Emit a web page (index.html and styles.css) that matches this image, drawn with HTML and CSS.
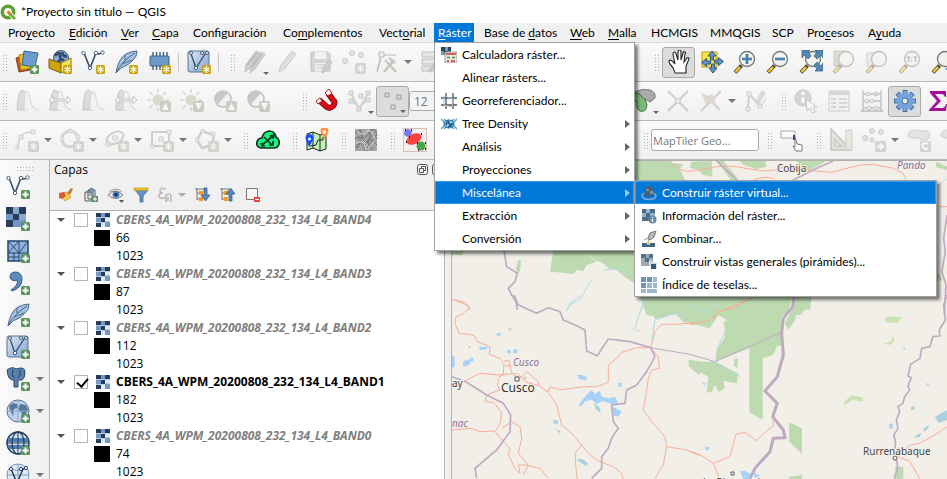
FILE: index.html
```html
<!DOCTYPE html>
<html lang="es">
<head>
<meta charset="utf-8">
<title>*Proyecto sin título — QGIS</title>
<link rel="stylesheet" href="styles.css">
</head>
<body>
<svg class="defs" aria-hidden="true">
<defs>
<linearGradient id="blue" x1="0" y1="0" x2="1" y2="1"><stop offset="0" stop-color="#dfe9f4"/><stop offset="1" stop-color="#7fa3cf"/></linearGradient>
<g id="plus"><rect x="15" y="15" width="9" height="9" rx="1.5" fill="#5b955e"/><path d="M19.500 16.500v6M16.500 19.500h6" stroke="#fff" stroke-width="2"/></g>
<g id="star"><rect x="15" y="15" width="9" height="9" rx="1.500" fill="#c8a412"/><path d="M19.500 16v7M16.500 17.700l6 3.600M16.500 21.300l6-3.600" stroke="#fff" stroke-width="1.300"/></g>
<g id="lens"><circle cx="14" cy="9" r="7.500" fill="#f1f1ee" stroke="#777b77" stroke-width="1.300"/><path d="M8.500 15.500 2 22.500" stroke="#4b4527" stroke-width="4"/><path d="M7 17 2.500 22" stroke="#f3c934" stroke-width="2.500"/></g>
<symbol id="i-logo" viewBox="0 0 16 16"><circle cx="8" cy="8" r="5.700" fill="none" stroke="#5d9f35" stroke-width="3.600"/><path d="m8.500 8.500 6.500 6.500" stroke="#fff" stroke-width="4.500"/><path d="m9 9 6 6" stroke="#6fad3b" stroke-width="3"/><path d="m7.500 7.500 3 3" stroke="#ee7913" stroke-width="3"/></symbol>
<symbol id="i-source" viewBox="0 0 24 24"><path d="m1 8 11-3 3 15-11 2z" fill="#c8501c" stroke="#86401c"/><path d="m4 5 11-2 2 15-11 2z" fill="#f0c419" stroke="#a78316"/><path d="m9 1 14 2-3 14-13-2z" fill="#6f9ace" stroke="#41678f"/><use href="#plus"/></symbol>
<symbol id="i-box" viewBox="0 0 24 24"><circle cx="13" cy="8" r="7.500" fill="#8db1dc" stroke="#415b7b"/><path d="M7 6q4-6 5 0t4 3M14 2q1 5 5 4M10 12l3-3" stroke="#304c6f" stroke-width="3" fill="none"/><path d="m1 9 12 4v10L1 18z" fill="#cfa300" stroke="#745d12"/><path d="m13 13 10-5v10l-10 5z" fill="#f6e163" stroke="#8d7419"/><use href="#star"/></symbol>
<g id="vee"><path d="M3 3 9 18 15 3q3 2 6-.500" fill="none" stroke="#39506b" stroke-width="1.600"/><g fill="#fff" stroke="#44576d" stroke-width=".9"><circle cx="2.500" cy="3" r="1.700"/><circle cx="9" cy="18" r="1.700"/><circle cx="15" cy="3" r="1.700"/><circle cx="21.500" cy="2.500" r="1.700"/></g></g>
<symbol id="i-vnew" viewBox="0 0 24 24"><use href="#vee"/><use href="#star"/></symbol>
<symbol id="i-vadd" viewBox="0 0 24 24"><use href="#vee"/><use href="#plus"/></symbol>
<g id="feather"><path d="M2 23Q4 9 12 4q6-3 11-3 0 6-4 9-4 5-12 8z" fill="#a4c1df" stroke="#48698b"/><path d="M2 23Q8 11 21 3M8 14l10-4M11 10V5" fill="none" stroke="#48698b"/></g>
<symbol id="i-fnew" viewBox="0 0 24 24"><use href="#feather"/><use href="#star"/></symbol>
<symbol id="i-fadd" viewBox="0 0 24 24"><use href="#feather"/><use href="#plus"/></symbol>
<symbol id="i-chip" viewBox="0 0 24 24"><path d="M6 2v18M9.500 2v18M13 2v18M16.500 2v18M20 2v18" stroke="#35516e" stroke-width="1.300"/><rect x="3" y="6" width="19" height="10" rx="1" fill="#6f98ca" stroke="#3e628b"/><use href="#star"/></symbol>
<g id="vbox"><rect x="1" y="1" width="21" height="21" rx="2" fill="url(#blue)" stroke="#55779c"/><path d="m4 4 5 14L18 4l3-1" fill="none" stroke="#334e6b" stroke-width="1.300"/><g fill="#fff" stroke="#445c76"><circle cx="4" cy="3" r="1.500"/><circle cx="9" cy="18" r="1.700"/><circle cx="15" cy="3" r="1.500"/><circle cx="20" cy="3" r="1.500"/></g></g>
<symbol id="i-vbnew" viewBox="0 0 24 24"><use href="#vbox"/><use href="#star"/></symbol>
<symbol id="i-vbadd" viewBox="0 0 24 24"><use href="#vbox"/><use href="#plus"/></symbol>
<symbol id="i-pencils" viewBox="0 0 24 24"><g fill="#a89c98" stroke="#777"><path d="m2 22 1-7L13 1l4 2L7 18z"/><path d="m7 23 1-7L18 2l4 2-10 15z"/></g><path d="m4 15 10-12M9 17 19 4" stroke="#776b66" stroke-width="2"/></symbol>
<symbol id="i-pencil" viewBox="0 0 24 24"><path d="m3 22 2-7L16 1l4 3L9 18z" fill="#d4d4c2" stroke="#888874"/><path d="m7 16 10-13" stroke="#8b8b75"/></symbol>
<symbol id="i-save" viewBox="0 0 24 24"><path d="M2 2h17l2 2v17H2z" fill="#aaa" stroke="#777"/><path d="M6 2h11v7H6zM6 13h12v8H6z" fill="#eee"/><path d="M7 15h9M7 18h9" stroke="#888"/><path d="m13 23 1-5 6-8 3 2-6 9z" fill="#a9a190" stroke="#777"/></symbol>
<symbol id="i-points" viewBox="0 0 24 24"><g fill="#ccc" stroke="#888"><circle cx="3" cy="11" r="2.500"/><circle cx="10" cy="3" r="2.500"/><circle cx="19" cy="5" r="2.500"/></g><rect x="13" y="13" width="11" height="11" rx="2" fill="#aaa798"/><path d="M18.500 15v7M15.500 16.500l6 4M15.500 20.500l6-4" stroke="#fff" stroke-width="1.300"/></symbol>
<symbol id="i-vertex" viewBox="0 0 24 24"><path d="M2 22 6 5h15M6 9 2 22" fill="none" stroke="#666"/><path d="M4 2h5v5H4z" fill="#eee" stroke="#666"/><path d="m9 22 10-12M10 10l11 12M14 8l6 5" stroke="#8b8876" stroke-width="2.500"/></symbol>
<symbol id="i-form" viewBox="0 0 24 24"><path d="M2 2h18v5H2zM2 9h18v5H2zM2 16h18v5H2z" fill="#d4d4c2" stroke="#777"/><path d="m9 22 12-15" stroke="#888" stroke-width="3"/></symbol>
<symbol id="i-hand" viewBox="0 0 24 24"><path d="M8 23q-1-5-5-9-2-3 0-4 2 0 5 4L6 4q0-2 1-2 2 0 2 2l2 6V2q0-2 1.500-2T14 2v8l2-7q0-2 2-1 1 0 0 2l-1 8 3-4q2-1 2 1l-3 7v7z" fill="#fff" stroke="#202020" stroke-width="1.100"/></symbol>
<symbol id="i-pan" viewBox="0 0 24 24"><path d="M2 2h15v15H2z" fill="#ffe43d" stroke="#b59a1b"/><path id="ar" d="m12 1 4 5h-2.500v4h-3V6H8z" fill="#6094c8" stroke="#315779"/><use href="#ar" transform="rotate(90 12.500 12)"/><use href="#ar" transform="rotate(180 12.500 12)"/><use href="#ar" transform="rotate(270 12.500 12)"/></symbol>
<symbol id="i-zin" viewBox="0 0 24 24"><use href="#lens"/><path d="M14 4v10M9 9h10" stroke="#4c80ad" stroke-width="2.700"/></symbol>
<symbol id="i-zout" viewBox="0 0 24 24"><use href="#lens"/><path d="M9 9h10" stroke="#4c80ad" stroke-width="2.700"/></symbol>
<symbol id="i-zfull" viewBox="0 0 24 24"><use href="#lens"/><g fill="#5688b5" stroke="#395e80" stroke-width=".7"><path d="M3 0h8L9 2l3 4-3 3-4-4-2 3zM24 0h-8l2 2-3 4 3 3 4-4 2 3zM24 21h-8l2-2-3-4 3-3 4 4 2-3z"/></g></symbol>
<symbol id="i-zsel" viewBox="0 0 24 24"><path d="M2 1h11v15H2z" fill="#bcb99d" stroke="#999"/><use href="#lens"/></symbol>
<symbol id="i-zlay" viewBox="0 0 24 24"><path d="M2 3h11v13H2z" fill="#ddd" stroke="#999"/><use href="#lens"/></symbol>
<symbol id="i-zone" viewBox="0 0 24 24"><use href="#lens"/><text x="8" y="12" class="one">1:1</text></symbol>
<symbol id="i-zlast" viewBox="0 0 24 24"><use href="#lens"/><path d="m23 13-9 6 9 5z" fill="#4c80ad"/></symbol>
<symbol id="i-hist" viewBox="0 0 24 24"><path d="M2 21Q3 1 7 1q5 0 6 20z" fill="#b8c0b2" stroke="#888"/><path d="M9 21q0-19 3-19 2 0 4 12 2 6 7 7" fill="#eee" stroke="#aaa"/></symbol>
<symbol id="i-hist2" viewBox="0 0 24 24"><use href="#i-hist" width="24" height="24"/><path d="m1 11 4-4v3h14V7l4 4-4 4v-3H5v3z" fill="#eee" stroke="#888"/></symbol>
<g id="sun"><path d="M11 0v22M0 11h22M3 3l16 16M19 3 3 19" stroke="#a8a48e" stroke-width="1.500"/><circle cx="11" cy="11" r="6.500" fill="#b8b49e" stroke="#f5f5f5" stroke-width="2"/></g>
<g id="up"><rect x="13" y="12" width="11" height="11" rx="2" fill="#97978c"/><path d="m18.500 14-3.500 7h7z" fill="#fff"/></g>
<g id="down"><rect x="13" y="12" width="11" height="11" rx="2" fill="#97978c"/><path d="m18.500 21-3.500-7h7z" fill="#fff"/></g>
<g id="half"><circle cx="10" cy="10" r="8" fill="#eee" stroke="#777" stroke-width="1.500"/><path d="M5 15A7 7 0 0 1 15 4z" fill="#888"/></g>
<symbol id="i-sunup" viewBox="0 0 24 24"><use href="#sun"/><use href="#up"/></symbol>
<symbol id="i-sundn" viewBox="0 0 24 24"><use href="#sun"/><use href="#down"/></symbol>
<symbol id="i-cup" viewBox="0 0 24 24"><use href="#half"/><use href="#up"/></symbol>
<symbol id="i-cdn" viewBox="0 0 24 24"><use href="#half"/><use href="#down"/></symbol>
<symbol id="i-magnet" viewBox="0 0 24 24"><path d="m4 11 8 7q3 2 6-1 3-4 0-6l-5-7" fill="none" stroke="#7c0808" stroke-width="6"/><path d="m5 12 7 6q3 2 6-1 3-4 0-6l-4-6" fill="none" stroke="#d60b14" stroke-width="4.500"/><path d="m1 12 4-3 2 3-4 3zM10 4l4-4 3 4-4 3z" fill="#fff" stroke="#a22"/></symbol>
<symbol id="i-tree" viewBox="0 0 24 24"><path d="m3 4 8 16 9-16M4 12l7 6 9-7" fill="none" stroke="#999" stroke-width="1.500"/><g fill="#ccc" stroke="#888"><path d="M1 2h4v4H1zM18 2h4v4h-4zM1 10h4v4H1zM18 9h4v4h-4zM9 18h4v4H9zM11 5h4v4h-4z"/></g></symbol>
<symbol id="i-squares" viewBox="0 0 24 24"><g fill="#ddd" stroke="#999"><path d="M4 4h4v4H4zM16 6h4v4h-4zM10 16h4v4h-4z"/></g></symbol>
<symbol id="i-blob" viewBox="0 0 24 24"><path d="M2 3q7-4 15-2 6 2 5 8l-5 4-7-4z" fill="#aaa" stroke="#777"/><path d="M1 5q6-2 8 3 4 2 5 8-1 8-7 6-4-2-3-8-5-4-3-9z" fill="#7cba78" stroke="#3f7541"/></symbol>
<symbol id="i-cross" viewBox="0 0 24 24"><path d="m2 2 20 20M22 2 2 22" stroke="#999" stroke-width="2"/><circle cx="12" cy="12" r="2.500" fill="#ddd" stroke="#999"/></symbol>
<symbol id="i-split" viewBox="0 0 24 24"><path d="M22 2 2 22M12 12l9 9" stroke="#999" stroke-width="2"/><path d="m2 3 6 4 6-2 3 13-6-5-4 3z" fill="#bbb398"/></symbol>
<symbol id="i-trace" viewBox="0 0 24 24"><path d="m4 20 1-15 11 12" fill="none" stroke="#999" stroke-width="2"/><path d="M3 3h4v4H3zM2 18h4v4H2zM14 15h4v4h-4z" fill="#ddd" stroke="#999"/><path d="m12 13 6-11 3 2-6 10zM22 9l-4 7" fill="#bcb99d" stroke="#999"/></symbol>
<symbol id="i-info" viewBox="0 0 24 24"><circle cx="9" cy="9" r="8" fill="#aaa" stroke="#888"/><path d="M9 8v6M9 3v3" stroke="#fff" stroke-width="3"/><path d="m12 10 1 12 3-3 2 5 3-1-2-5h4z" fill="#fff" stroke="#888"/></symbol>
<symbol id="i-table" viewBox="0 0 24 24"><path d="M2 2h20v20H2z" fill="#eee" stroke="#999"/><path d="M2 2h20v4H2z" fill="#aaa"/><path d="M4 10h5m3 0h8M4 14h5m3 0h8M4 18h5m3 0h8" stroke="#999" stroke-width="1.500"/></symbol>
<symbol id="i-abacus" viewBox="0 0 24 24"><path d="M3 1v22M21 1v22M3 5h18M3 12h18M3 19h18M1 22h22" stroke="#777" stroke-width="1.300"/><g fill="#ddd" stroke="#888"><circle cx="8" cy="5" r="2"/><circle cx="16" cy="5" r="2" fill="#caa"/><circle cx="7" cy="12" r="2"/><circle cx="12" cy="12" r="2"/><circle cx="9" cy="19" r="2"/><circle cx="16" cy="19" r="2"/></g></symbol>
<symbol id="i-gear" viewBox="0 0 24 24"><path d="M12 1v22M1 12h22M4.200 4.200l15.600 15.600M19.800 4.200 4.200 19.800" stroke="#466f9b" stroke-width="5"/><path d="M12 2v20M2 12h20M5 5l14 14M19 5 5 19" stroke="#74a3df" stroke-width="3.500"/><circle cx="12" cy="12" r="7.500" fill="#74a3df"/><circle cx="12" cy="12" r="3" fill="#e5e8ee" stroke="#466f9b"/></symbol>
<symbol id="i-sigma" viewBox="0 0 24 24"><path d="M4 2h16v6h-1q-1-3-4-3H9l6 7-7 7h8q3 0 4-4h1l-1 7H3v-1l8-9-7-8z" fill="#a90d9c"/></symbol>
<g id="gst"><rect x="13" y="13" width="11" height="11" rx="2" fill="#aaa798"/><path d="M18.500 15v7M15.500 16.500l6 4M15.500 20.500l6-4" stroke="#fff" stroke-width="1.300"/></g>
<symbol id="i-curve" viewBox="0 0 24 24"><path d="M3 20Q3 3 18 4" fill="none" stroke="#999" stroke-width="1.500"/><path d="M1 18h3v3H1zM4 7h4v4H4zM16 2h4v4h-4z" fill="#ddd" stroke="#999"/><use href="#gst"/></symbol>
<symbol id="i-circle" viewBox="0 0 24 24"><circle cx="10" cy="11" r="8" fill="none" stroke="#aaa" stroke-width="3"/><g fill="#ddd" stroke="#999"><circle cx="10" cy="3" r="2"/><circle cx="2" cy="11" r="2"/><circle cx="18" cy="9" r="2"/></g><use href="#gst"/></symbol>
<symbol id="i-ellipse" viewBox="0 0 24 24"><ellipse cx="10" cy="10" rx="9" ry="5.500" fill="none" stroke="#999" stroke-width="2" transform="rotate(-28 10 10)"/><circle cx="10" cy="10" r="2.500" fill="#ddd" stroke="#999"/><path d="M1 14h4v4H1z" fill="#ddd" stroke="#999"/><use href="#gst"/></symbol>
<symbol id="i-rect" viewBox="0 0 24 24"><path d="M2 4h17v14H2z" fill="none" stroke="#999" stroke-width="2"/><path d="M9 9h4v4H9zM17 2h4v4h-4zM0 16h4v4H0z" fill="#ddd" stroke="#999"/><use href="#gst"/></symbol>
<symbol id="i-poly" viewBox="0 0 24 24"><path d="M7 3 2 12l5 8 10-3 2-10z" fill="none" stroke="#999" stroke-width="2.500"/><g fill="#ddd" stroke="#999"><circle cx="8" cy="3" r="2"/><circle cx="2" cy="12" r="2"/><circle cx="18" cy="6" r="2"/></g><use href="#gst"/></symbol>
<symbol id="i-cloud" viewBox="0 0 24 24"><path d="M5 20q-5-1-4-6 1-4 5-4 1-6 7-7 6 0 7 6 4 2 3 7-1 4-5 4z" fill="#1df07b" stroke="#0b3521" stroke-width="1.700"/><path d="m6 17 11-9M8 9l8 8M14 8l4-1-1 4M13 17h4v-4M5 15l1 3h3" fill="none" stroke="#083c23" stroke-width="1.700"/></symbol>
<symbol id="i-route" viewBox="0 0 24 24"><path d="m2 6 6-2 7 3 6-2v16l-6 2-7-3-6 2z" fill="#c0f2b5" stroke="#222"/><path d="M8 4v16M15 7v16M5 18l6-1 2-5h5V9" fill="none" stroke="#222"/><path d="M4 19 1 12a4 4 0 1 1 7 0z" fill="#174cff"/><circle cx="4.500" cy="11" r="1.500" fill="#fff"/><path d="m20 11-4-6a4 4 0 1 1 7 0z" fill="#ff9142"/><circle cx="19.500" cy="4" r="1.800" fill="#fff"/></symbol>
<symbol id="i-noise" viewBox="0 0 24 24"><path d="M1 1h22v22H1z" fill="#a5a5a5"/><path d="M1 5q6-5 7 2t7-2 8 3M1 11q5-4 8 1t7-2 7 1M2 20q1-6 6-4t6-3 9 4M6 1l5 22M17 1l-4 22M20 12q-6 2-2 10M4 8q5 5-1 12" fill="none" stroke="#777"/><path d="M3 3q5 6 9 1t9 6M2 15q8-3 9 4t9-6M8 12l6 6" fill="none" stroke="#ddd"/></symbol>
<symbol id="i-blobs" viewBox="0 0 24 24"><path d="M.5.5h23v23H.5z" fill="#f4eeee" stroke="#d8bcbc"/><circle cx="5" cy="5" r="3.800" fill="#7777f4"/><ellipse cx="11" cy="11" rx="8" ry="5" transform="rotate(-28 11 11)" fill="#ff4343"/><circle cx="18" cy="18" r="4.500" fill="#48a34b"/><path d="M2 2h1M8 2h1M6 9h1M3 14h1M18 6h1M14 15h1M22 15h1M22 21h1M15 22h1" stroke="#222" stroke-width="2"/></symbol>
<symbol id="i-click" viewBox="0 0 24 24"><path d="M1 3h14v7H1z" fill="#fafafa" stroke="#aaa"/><path d="M14 7v5" stroke="#33a" stroke-width="2"/><path d="m15 9 2 7 5 1v6h-6l-3-5 2 1z" fill="#fff" stroke="#777"/></symbol>
<symbol id="i-angle" viewBox="0 0 24 24"><path d="M2 1v21h20zM6 12v6h6z" fill="#ccc8bd" stroke="#888" stroke-width="1.500" fill-rule="evenodd"/><path d="M17 2h6v20h-6z" fill="#ddd8bd" stroke="#999"/></symbol>
<symbol id="i-move" viewBox="0 0 24 24"><g fill="#ccc" stroke="#888"><circle cx="3" cy="10" r="2.500"/><circle cx="10" cy="3" r="2.500"/><circle cx="19" cy="4" r="2.500"/><circle cx="10" cy="12" r="2"/></g><rect x="13" y="13" width="11" height="11" rx="1" fill="#aaa"/><path d="M15 18.500h6m-3-3 3 3-3 3" fill="none" stroke="#fff" stroke-width="2"/></symbol>
<symbol id="i-rot" viewBox="0 0 24 24"><path d="M1 8Q1 2 8 2t9 1q6-1 6 4t-7 5q-5-3-8-2t-7-2z" fill="#ccc" stroke="#999"/><rect x="13" y="13" width="11" height="11" rx="1" fill="#aaa"/><path d="M21 20q-3 3-5-1t3-4l2 1" fill="none" stroke="#fff" stroke-width="2"/></symbol>
<symbol id="i-radd" viewBox="0 0 24 24"><path d="M0 0h20v20H0z" fill="#6e95c4"/><path d="M0 0h7v7H0zM13 0h7v7h-7zM7 7h6v6H7zM0 13h7v7H0z" fill="#263c58"/><path d="M7 0h6v7H7zM13 7h7v6h-7z" fill="#89aad0"/><use href="#plus"/></symbol>
<symbol id="i-mesh" viewBox="0 0 24 24"><path d="M2 2h20v20H2z" fill="#8fb3dd" stroke="#274668" stroke-width="1.500"/><path d="M13 2v20M2 14h20M2 2l11 12M13 2 2 14M22 2 13 14M8 14v8M2 18h11" fill="none" stroke="#274668"/><use href="#plus"/></symbol>
<symbol id="i-comma" viewBox="0 0 24 24"><path d="M5 19q8-5 6-10-6 2-7-3 0-5 6-5 6 1 6 7 0 9-10 12z" fill="#5c8cbc" stroke="#35597f"/><use href="#plus"/></symbol>
<symbol id="i-pg" viewBox="0 0 24 24"><path d="M1 3q5-4 9-1 9-3 9 3 0 6-3 8h-4v7H8v-7q-6 1-7-10z" fill="#5680ad" stroke="#2b496b"/><path d="M7 3q-2 5 1 8M14 3q1 6-2 8" fill="none" stroke="#243f5d"/><use href="#plus"/></symbol>
<symbol id="i-globe1" viewBox="0 0 24 24"><circle cx="12" cy="12" r="11" fill="#bdd2e9" stroke="#54779d"/><path d="m3 7 4-3 4 1 1 4-4 1-1 7-3-6zM14 5l6 1 2 5-4 7-3-5-3-2z" fill="#3d6287" opacity=".8"/><path d="M1 12h22M12 1v22" stroke="#8aa9cb"/><use href="#plus"/></symbol>
<symbol id="i-globe2" viewBox="0 0 24 24"><circle cx="12" cy="12" r="11" fill="#d6e4f2" stroke="#223f5e" stroke-width="1.500"/><path d="M2 7h20v4H2zM1 14h21v4H3z" fill="#4f7eb0"/><ellipse cx="12" cy="12" rx="6" ry="11" fill="none" stroke="#223f5e" stroke-width="1.300"/><path d="M12 1v22M1 12h22" stroke="#223f5e"/><use href="#plus"/></symbol>
<symbol id="i-globe3" viewBox="0 0 24 24"><circle cx="12" cy="12" r="11" fill="#e1ebf5" stroke="#779bbf"/><path d="M1 12h22M12 1v22M4 5q8 5 16 0" fill="none" stroke="#779bbf"/><path d="m5 6 6 14 6-14 3-1" fill="none" stroke="#263f5c" stroke-width="1.500"/><g fill="#fff" stroke="#263f5c"><circle cx="5" cy="6" r="1.600"/><circle cx="15" cy="6" r="1.600"/><circle cx="20" cy="5" r="1.600"/></g></symbol>
<symbol id="i-brush" viewBox="0 0 16 16"><path d="m9 6 4-5 2 1-3 6z" fill="#c47831"/><path d="m2 7 6-2 5 5-6 4z" fill="#f5d548" stroke="#b78b2c" stroke-width=".7"/><path d="m1 6 5-1 2 4-4 3-3-1z" fill="#df563c"/></symbol>
<symbol id="i-group" viewBox="0 0 16 16"><path d="M2 5h7v9H2zM5 3h7v9H5z" fill="#eee" stroke="#555"/><path d="M7 9V2q2-2 3 0v8" fill="none" stroke="#3e6691"/><path d="M9 9h6v6H9z" fill="#5b955e"/><path d="M12 10v4m-2-2h4" stroke="#fff"/></symbol>
<symbol id="i-eye" viewBox="0 0 16 16"><path d="M0 8q7-8 15 0-7 7-15 0z" fill="#eee" stroke="#777"/><circle cx="8" cy="7.500" r="3.500" fill="#4b81b7"/><circle cx="8" cy="7.500" r="1.500" fill="#112a45"/><path d="M1 5q7-6 13 0" fill="none" stroke="#999"/><path d="M11 13h5l-2.500 3z" fill="#555"/></symbol>
<symbol id="i-filter" viewBox="0 0 16 16"><path d="M2 3h13L10 9v6H7V9z" fill="#6294c7" stroke="#3c6791" stroke-width=".8"/><path d="M1 1h14v2.500H1z" fill="#f2c92a" stroke="#a88a1b" stroke-width=".6"/></symbol>
<symbol id="i-eps" viewBox="0 0 16 16"><path d="M8 2q-6-2-6 2 0 2 3 2-4 0-4 3 0 4 7 1M8 15V9q0-2 2.500-2T13 9v6m-3-5v4" fill="none" stroke="#bbb" stroke-width="1.700"/></symbol>
<g id="nodes"><path d="M2 1v12M0 2h9M2 6h3m-3 6h3" stroke="#777" fill="none"/><path d="M4 4h4v4H4zM4 10h4v4H4z" fill="#f59b24"/></g>
<symbol id="i-expand" viewBox="0 0 16 16"><use href="#nodes"/><path d="M9 1h3v7h3l-4.500 6L6 8h3z" fill="#5688bd" stroke="#2f5681" stroke-width=".7"/></symbol>
<symbol id="i-collapse" viewBox="0 0 16 16"><use href="#nodes"/><path d="M9 14h3V7h3l-4.500-6L6 7h3z" fill="#5688bd" stroke="#2f5681" stroke-width=".7"/></symbol>
<symbol id="i-remove" viewBox="0 0 16 16"><path d="M1.500 1.500h11v11h-11z" fill="#f5f5f5" stroke="#777"/><path d="M9 10h6v5H9z" fill="#ee4141"/><path d="M10 12.500h4" stroke="#fff"/></symbol>
<symbol id="i-raster" viewBox="0 0 14 14"><path d="M0 0h14v14H0z" fill="#b4cbe7"/><path d="M0 0h5v4H0zM9 0h5v4H9zM5 5h4v4H5zM0 10h5v4H0z" fill="#263c58"/><path d="M0 5h5v4H0zM9 9h5v5H9zM5 0h4v4H5z" fill="#7899c2"/><path d="M9 5h5v3H9zM5 10h4v4H5z" fill="#dfebf8"/></symbol>
<symbol id="i-dock" viewBox="0 0 12 12"><rect x=".5" y=".5" width="10" height="10" rx="2" fill="none" stroke="#555"/><path d="M2.500 4.500h4v4h-4zM4.500 4V2.500h4v4H7" fill="none" stroke="#555"/></symbol>
<symbol id="m-calc" viewBox="0 0 16 16"><path d="M0 0h10v8H0z" fill="#789bb5"/><path d="M0 0h4v4H0zM7 0h3v4H7zM3 4h4v3H3z" fill="#2c4358"/><path d="M4 5h12v11H4z" fill="#e9e9e2" stroke="#888" stroke-width=".8"/><path d="M5 7h10M6 14h2m2 0h4" stroke="#c33" stroke-width="1.500"/><path d="M6 10.500h3m2 0h3" stroke="#4a915b" stroke-width="1.500"/></symbol>
<symbol id="m-geo" viewBox="0 0 16 16"><path d="M5 0v16M12 0v16M0 5h16M0 12h16" stroke="#555" stroke-width="1.300"/><path d="M3 3 13 6l-2 8-8-2z" fill="none" stroke="#a8c5dc"/></symbol>
<symbol id="m-tree" viewBox="0 0 16 16"><path d="m0 3 5 5-5 5M16 3l-5 5 5 5M3 3l10 10M3 13 13 3" fill="none" stroke="#51a6d2" stroke-width="1.500"/><ellipse cx="8" cy="8" rx="5" ry="4" fill="#93cbe8" stroke="#20608f"/><path d="M5 9q2-6 3-2t4 0M7 11l4-2" fill="none" stroke="#174f7d" stroke-width="1.500"/></symbol>
<symbol id="m-virt" viewBox="0 0 16 16"><ellipse cx="8" cy="11" rx="7" ry="3.500" fill="none" stroke="#89acd0" stroke-width="1.500"/><path d="M4 6q0-5 4-5t4 5l1 4q-5 3-10 0z" fill="#465f75"/><path d="M5 4h3v2H5zM9 6h3v3H9z" fill="#7f94a5"/></symbol>
<symbol id="m-info" viewBox="0 0 16 16"><path d="M1 1h13v12H1z" fill="#4c6b85"/><path d="M5 1h4v4H5zM1 5h4v4H1zM9 5h5v4H9z" fill="#9ab2c6"/><circle cx="11.500" cy="11.500" r="4" fill="#6887a1"/><path d="M11.500 11v3m0-5v1" stroke="#fff" stroke-width="1.500"/></symbol>
<symbol id="m-merge" viewBox="0 0 16 16"><path d="m7 7 2-5 6-2-2 6-4 3z" fill="#b8bcb9" stroke="#777"/><path d="m3 9 4-2 1 5" fill="none" stroke="#999"/><path d="M1 12h13v4H1z" fill="#42647f"/><circle cx="7.500" cy="12" r="2" fill="#d6da88"/></symbol>
<symbol id="m-pyr" viewBox="0 0 16 16"><path d="M0 0h12v12H0z" fill="#9bacb9"/><path d="M0 0h5v4H0zM4 4h4v4H4zM8 0h4v4H8z" fill="#56718a"/><path d="m8 6 8 3v6l-8-3z" fill="#d7dbdf"/><path d="M10 10h5v5h-5z" fill="#355a7b"/></symbol>
<symbol id="m-tile" viewBox="0 0 16 16"><path d="M0 0h5v5H0zM6 0h5v5H6zM0 6h5v5H0z" fill="#6f93ad"/><path d="M12 0h4v5h-4zM6 6h5v5H6zM0 12h5v4H0zM12 6h4v5h-4zM6 12h10v4H6z" fill="#9cb8cc"/></symbol>
</defs>
</svg>

<header class="title"><svg class="logo"><use href="#i-logo"/></svg><h1>*Proyecto sin título — QGIS</h1></header>

<nav class="menubar" aria-label="Menú principal">
<button>Pro<u>y</u>ecto</button><button><u>E</u>dición</button><button><u>V</u>er</button><button><u>C</u>apa</button><button>Configuración</button><button>Co<u>m</u>plementos</button><button>Vect<u>o</u>rial</button>
<div class="open"><button class="on"><u>R</u>áster</button>
<div class="menu">
<button><svg><use href="#m-calc"/></svg>Calculadora ráster...</button>
<button><i></i>Alinear rásters...</button>
<button><svg><use href="#m-geo"/></svg>Georreferenciador...</button>
<button class="sub"><svg><use href="#m-tree"/></svg>Tree Density</button>
<button class="sub"><i></i>Análisis</button>
<button class="sub"><i></i>Proyecciones</button>
<div class="open"><button class="sub hot"><i></i>Miscelánea</button>
<div class="menu second">
<button class="hot"><svg><use href="#m-virt"/></svg>Construir ráster virtual...</button>
<button><svg><use href="#m-info"/></svg>Información del ráster...</button>
<button><svg><use href="#m-merge"/></svg>Combinar...</button>
<button><svg><use href="#m-pyr"/></svg>Construir vistas generales (pirámides)...</button>
<button><svg><use href="#m-tile"/></svg>Índice de teselas...</button>
</div></div>
<button class="sub"><i></i>Extracción</button>
<button class="sub"><i></i>Conversión</button>
</div></div>
<button>Base de <u>d</u>atos</button><button><u>W</u>eb</button><button><u>M</u>alla</button><button>HCMGIS</button><button>MMQGIS</button><button>SCP</button><button>Pro<u>c</u>esos</button><button>A<u>y</u>uda</button>
</nav>

<div class="bar">
<div class="group first"><button><svg><use href="#i-source"/></svg></button><button><svg><use href="#i-box"/></svg></button><button><svg><use href="#i-vnew"/></svg></button><button><svg><use href="#i-fnew"/></svg></button><button><svg><use href="#i-chip"/></svg></button><hr><button><svg><use href="#i-vbnew"/></svg></button><hr></div>
<div class="group off file"><button class="mini"><svg><use href="#i-pencils"/></svg></button><button><svg><use href="#i-pencil"/></svg></button><button><svg><use href="#i-save"/></svg></button><button><svg><use href="#i-points"/></svg></button><button class="drop"><svg><use href="#i-vertex"/></svg></button><button><svg><use href="#i-form"/></svg></button></div>
<div class="group"><button class="down"><svg><use href="#i-hand"/></svg></button><button><svg><use href="#i-pan"/></svg></button><button><svg><use href="#i-zin"/></svg></button><button><svg><use href="#i-zout"/></svg></button><button><svg><use href="#i-zfull"/></svg></button><button class="dim"><svg><use href="#i-zsel"/></svg></button><button class="dim"><svg><use href="#i-zlay"/></svg></button><button class="dim"><svg><use href="#i-zone"/></svg></button><button><svg><use href="#i-zlast"/></svg></button></div>
</div>

<div class="bar">
<div class="group first off hist"><button><svg><use href="#i-hist"/></svg></button><button><svg><use href="#i-hist2"/></svg></button><button><svg><use href="#i-hist"/></svg></button><button><svg><use href="#i-hist2"/></svg></button><button><svg><use href="#i-sunup"/></svg></button><button><svg><use href="#i-sundn"/></svg></button><button><svg><use href="#i-cup"/></svg></button><button><svg><use href="#i-cdn"/></svg></button></div>
<div class="group snap"><button><svg><use href="#i-magnet"/></svg></button><button class="dim mini"><svg><use href="#i-tree"/></svg></button><button class="down mini"><svg><use href="#i-squares"/></svg></button><input class="num" aria-label="Tolerancia" value="12"></div>
<div class="group bare digit"><button class="mini"><svg><use href="#i-blob"/></svg></button><button class="dim"><svg><use href="#i-cross"/></svg></button><button class="dim drop"><svg><use href="#i-split"/></svg></button><button class="dim"><svg><use href="#i-trace"/></svg></button></div>
<div class="group"><button class="dim"><svg><use href="#i-info"/></svg></button><button class="dim"><svg><use href="#i-table"/></svg></button><button class="dim"><svg><use href="#i-abacus"/></svg></button><button class="down"><svg><use href="#i-gear"/></svg></button><button><svg><use href="#i-sigma"/></svg></button></div>
</div>

<div class="bar">
<div class="group first off"><button class="drop"><svg><use href="#i-curve"/></svg></button><button class="drop"><svg><use href="#i-circle"/></svg></button><button class="drop"><svg><use href="#i-ellipse"/></svg></button><button class="drop"><svg><use href="#i-rect"/></svg></button><button class="drop"><svg><use href="#i-poly"/></svg></button></div>
<div class="group"><button><svg><use href="#i-cloud"/></svg></button></div>
<div class="group"><button><svg><use href="#i-route"/></svg></button></div>
<div class="group"><button><svg><use href="#i-noise"/></svg></button></div>
<div class="group plug"><button><svg><use href="#i-blobs"/></svg></button></div>
<div class="group"><input class="geo" aria-label="Geocodificador" placeholder="MapTiler Geo..."></div>
<div class="group"><button><svg><use href="#i-click"/></svg></button></div>
<div class="group off"><button><svg><use href="#i-angle"/></svg></button><button class="drop"><svg><use href="#i-move"/></svg></button><button><svg><use href="#i-rot"/></svg></button><button><svg><use href="#i-rot"/></svg></button></div>
</div>

<main>
<aside class="side" aria-label="Administrar capas">
<button><svg><use href="#i-vadd"/></svg></button><button><svg><use href="#i-radd"/></svg></button><button><svg><use href="#i-mesh"/></svg></button><button><svg><use href="#i-comma"/></svg></button><button><svg><use href="#i-fadd"/></svg></button><button><svg><use href="#i-vbadd"/></svg></button><button class="drop"><svg><use href="#i-pg"/></svg></button><button class="drop"><svg><use href="#i-globe1"/></svg></button><button><svg><use href="#i-globe2"/></svg></button><button class="drop"><svg><use href="#i-globe3"/></svg></button>
</aside>
<section class="panel">
<div class="head"><h2>Capas</h2><svg><use href="#i-dock"/></svg><svg><use href="#i-dock"/></svg></div>
<div class="tools"><button><svg><use href="#i-brush"/></svg></button><button><svg><use href="#i-group"/></svg></button><button><svg><use href="#i-eye"/></svg></button><button><svg><use href="#i-filter"/></svg></button><button class="drop"><svg><use href="#i-eps"/></svg></button><button><svg><use href="#i-expand"/></svg></button><button><svg><use href="#i-collapse"/></svg></button><button><svg><use href="#i-remove"/></svg></button></div>
<ul class="tree">
<li><label><input type="checkbox"><svg><use href="#i-raster"/></svg>CBERS_4A_WPM_20200808_232_134_L4_BAND4</label><p class="min">66</p><p>1023</p></li>
<li><label><input type="checkbox"><svg><use href="#i-raster"/></svg>CBERS_4A_WPM_20200808_232_134_L4_BAND3</label><p class="min">87</p><p>1023</p></li>
<li><label><input type="checkbox"><svg><use href="#i-raster"/></svg>CBERS_4A_WPM_20200808_232_134_L4_BAND2</label><p class="min">112</p><p>1023</p></li>
<li class="live"><label><input type="checkbox" checked><svg><use href="#i-raster"/></svg>CBERS_4A_WPM_20200808_232_134_L4_BAND1</label><p class="min">182</p><p>1023</p></li>
<li><label><input type="checkbox"><svg><use href="#i-raster"/></svg>CBERS_4A_WPM_20200808_232_134_L4_BAND0</label><p class="min">74</p><p>1023</p></li>
</ul>
</section>
<section class="map" aria-label="Mapa">
<svg viewBox="452 161 495 318" preserveAspectRatio="xMinYMin slice">
<g transform="translate(640 155) scale(.3333)">
<path class="wood" d="M-10 15H80L100 25 130 28 120 42 135 75H-10V60L30 65 28 45-10 42zM155 20 215 18 218 65 190 60 175 45 150 38zM230 18H250L285 60 300 80H275L255 50zM300 18H375L380 35 350 42 310 30zM470 18H560L500 50 480 40zM0 425H90L70 445 30 440 60 470 75 490 20 480zM110 432H250L235 480 210 520 130 500 100 470 140 450zM180 423H460L440 480 400 480 300 520 235 480zM470 423H515L505 455 480 480H455zM890 20l31 15v10l-35-10zM880 360l15-5 12 20-15 5z"/>
<path class="road" d="M90 18Q120 55 160 48T230 35 330 42 420 38L480 42 530 48 575 52 660 30 700 28 760 40 790 55 800 80M330 80q40-20 70-10M900 155h21M340 425l-60 35-50 10"/>
<path class="edge" d="M500 55 540 35 580 18M230 18 290 75M500 55 450 80M921 180l-10 70 5 40-10 60 12 40-5 90"/>
<path class="water" d="M921 70l-30 25M0 470q20-30 10-45M90 430l-30 30"/>
</g>
<g transform="translate(430 170) scale(.3333)">
<path class="wood" d="M620-30H720L700 10 680 30H615zM66 242h35l-5 13H66zM265 270h8l-2 30-8 12-5-14zM370 242H455L500 275 470 285 460 303 440 300 430 312 400 308 360 305zM455 242H613V340L585 322 560 300 535 295 520 280 500 272zM665 385H770V450L740 430 690 425 662 415z"/>
<path class="edge" d="M222 242 230 290 262 310 255 335 235 355 245 375 258 395 262 420"/>
<path class="road" d="M66 388 85 395 110 405 120 420"/>
<path class="water" d="M410 420 425 400 450 390 475 345 485 330M520 300l50-5 20 15M645 420 660 400 655 385"/>
</g>
<g transform="translate(440 295) scale(.3333)">
<path class="wood" d="M632 5H780V60L720 55 645 72 632 40zM745 195l35 10v35l-15-10-18-15z"/>
<path class="lake" d="M412 240l15 0 15 8-5 8-20-4zM440 300l15-15 10 12 15-10 5 18 20 5 20-5 10 20-15 5-30-12-20 8-15-12-20 5-10 15-10-2 12-18zM520 335l25 15-10 15-18-5zM535 263h10v12h-10zM68 200l20-8 3 15-20 8zM118 155l25 0-2 8-22 2zM170 114h12v8h-12zM202 165l10 0v10h-10zM220 163l12 0v12h-12zM36 180l8 5v30l-8 3zM90 188h10v12h-10z"/>
<path class="fill" d="M340 374l15 3-2 11-12-2zM412 490l20 5 12 10-5 8-25-15zM462 323l18 15 2 15-15-10zM345 402l15 5 2 10z"/>
<path class="road" d="M36 13 75 22 90 38 70 55 48 65 45 85 58 115 88 118 103 122 112 140 150 155 148 178 180 190 192 205 190 240 178 245 172 270 180 285 140 300 135 318 165 325 185 355 180 385 165 410 195 445 210 460 205 480 225 520 240 535 235 510 255 510 300 520 325 550M192 198l15-2 8 38M195 212l18 0M36 265 70 260 120 235 175 240 230 235 260 262 297 272 325 292 330 275 360 285 395 280 430 275 470 275 505 262 505 210 535 185 545 172 590 158 632 158M220 240l20 10 20-20 35 30 0 12M325 292 350 330 365 390 400 420 425 450 450 480 480 500 520 515 545 535 550 555M425 450 405 475 408 520 412 555M36 405 95 400 120 410 165 408M185 400 215 380 240 395 245 430 235 475 265 510 250 540M632 158 655 185 658 220 635 225 625 250 618 300 610 345 635 380 675 425 680 455 670 510 645 550M680 455l60 10 40 15M632 158 645 110 665 88 700 88 780 83"/>
<path class="edge" d="M222 0 235 30 290 55 325 38 360 50 370 75 410 92 435 105 440 168 472 182 505 132 570 140 632 158M632 158 645 185 620 230 590 270 560 285 555 325 515 330 520 380 535 400 515 430 505 460 485 485 485 520 455 550M36 245 80 262 140 300 190 325 212 360 210 410 170 465 105 520 110 550"/>
<path class="water" d="M380 50 390 25 425 0M635 140 645 75 700 55 740 60M578 100l22 10M610 20l-25 80"/>
<path class="wood" d="M206 100h8v7h-8zM250 245h8v6h-8zM85 153h6v6h-6z"/>
</g>
<g transform="translate(690 295) scale(.3333)">
<path class="wood" d="M0 0H90L70 40 65 75 30 72 25 40 0 30zM160 40 175 35 170 25 215 0H315L280 50 275 70 275 150 260 155 250 180 218 190V375L178 352V160L75 200 80 165 105 125 102 80 130 65zM315 5h50l-5 40-35-5-10 35-20 30-10-20 20-40zM0 195 40 200 75 200 135 230 145 235 140 265 100 258 105 280 85 290 75 270 65 290 50 293 55 245 0 215zM135 190h8v28l-12-5zM297 382l39 18v76l-38-35zM298 545l38-5v15h-38zM615 515h25v40h-20z"/>
<path class="wood soft" d="M585 65h50l-10 20-40-5zM462 320l25-20 32 8v12l-30-5-25 15zM580 145l20-5 10-15-12-5 14 8v10l-10 12z"/>
<path class="lake" d="M598 387l10-3v18l-10-2zM47 455l10 0v10h-10zM150 528l15 0 20 10-5 15h-20zM190 530l20 12-15 8z"/>
<path class="fill" d="M735 365l36-20v30l-25 10zM663 337l10-5v12l-10 2zM697 405l18-15 2 5-10 14zM673 425l20-12-3 12-12 4zM710 265h7v6h-7zM35 262l12 2-2 8zM640 158h6v6h-6z"/>
<path class="road" d="M0 90 60 75 90 50 180 12 200 0M0 470 40 485 70 505 120 485 138 418 165 412 200 437 222 415 250 392 250 372M70 505l20 50M771 395 735 420 690 445 660 450 625 485M625 485 660 500 690 552"/>
<path class="edge slim" d="M-118 158 0 178 75 200 275 112"/>
<path class="edge wide" d="M312 5 308 35 280 70 275 115 280 180 262 245 225 288 262 325 248 365 280 405 285 428 250 430 240 470 195 520 180 550"/>
<path class="edge" d="M771 0l-10 30 5 45-18 30 2 18-22 2-8 30-25 5-5 30-28 18-8 35 10 5-10 25 5 12-15 20-5 20-15 10 5 15-10 25 5 25-12 20 5 25-5 25 10 35 0 20-8 20 8 52"/>
<path class="water" d="M0 35l45 15 60-45M80 165l25-55M185 60l0 70M75 200l75 45"/>
</g>
<path d="M515 377h4v4h-4zM731 472h3v3h-3z" class="dot"/><circle class="dot" cx="895" cy="458" r="2"/>
<text class="town" x="777" y="172">Cobija</text><text class="region" x="897" y="169">Pando</text><text class="region" x="513" y="366">Cusco</text><text class="city" x="501" y="392">Cusco</text><text class="town" x="452" y="387">ay</text><text class="region" x="452" y="427">nac</text><text class="town" x="863" y="455">Rurrenabaque</text><text class="town" x="703" y="486">La Rinconada</text>
</svg>
</section>
</main>
</body>
</html>
```
FILE: styles.css
```css
* { box-sizing: border-box; }
body {
  margin: 0;
  height: 100vh;
  display: flex;
  flex-direction: column;
  overflow: hidden;
  background: #f0f0f0;
  color: #000;
  font: 12px/18px "Open Sans", "Noto Sans", sans-serif;
}
.defs { position: absolute; width: 0; height: 0; }
button { border: 0; padding: 0; background: none; font: inherit; color: inherit; }
h1, h2, p, ul { margin: 0; padding: 0; font: inherit; }
svg { display: block; }
u { text-underline-offset: 2px; }

.title { flex: none; height: 23px; background: #fff; display: flex; align-items: center; }
.title, .menubar { font-family: Lato, "Open Sans", sans-serif; }
.logo { width: 16px; height: 16px; margin-right: 5px; }

.menubar {
  flex: none;
  height: 20px;
  padding-left: 4px;
  display: grid;
  grid-template-columns: 61px 52px 31px 41px 90px 96px 59px 46px 86px 38px 43px 59px 62px 35px 61px 1fr;
  border-bottom: 1px solid #dadada;
}
.menubar > button, .on { height: 20px; padding: 0 4px; text-align: left; white-space: nowrap; }
.open { position: relative; }
.on { width: 40px; background: #0078d7; color: #fff; }

.menu {
  position: absolute;
  z-index: 2;
  top: 19px;
  left: 0;
  width: 201px;
  background: #fff;
  border: 1px solid #a0a0a0;
  box-shadow: 3px 3px 3px rgba(0, 0, 0, .5);
}
.second { top: -1px; left: 199px; width: 303px; }
.menu button { position: relative; display: flex; align-items: center; width: 100%; height: 23px; white-space: nowrap; }
.menu svg, .menu i { width: 16px; height: 16px; margin: 0 5px 0 6px; }
.menu .hot { background: #0078d7; color: #fff; box-shadow: inset 0 0 0 1px #2f9bf0; }
.sub::after {
  content: "";
  margin: 0 4px 0 auto;
  border: 4px solid transparent;
  border-left: 5px solid #666;
  border-right: 0;
}
.sub.hot::after { border-left-color: #9cc9f0; }

.bar {
  flex: none;
  height: 39px;
  display: flex;
  background: linear-gradient(#fafafa, #efefef);
  border-bottom: 1px solid #b8b8b8;
  overflow: hidden;
}
.group { flex: none; display: flex; align-items: center; margin-left: 6px; }
.group.first { margin-left: 0; }
.group::before {
  content: "";
  width: 5px;
  height: 17px;
  margin: 0 3px 0 2px;
  background: radial-gradient(circle, #b0b0b0 1px, transparent 1px) 0 0 / 3px 3px;
}
.group.bare::before { display: none; }
.group button { width: 33px; height: 31px; display: flex; align-items: center; justify-content: center; position: relative; }
.group svg { width: 24px; height: 24px; }
.group hr { width: 1px; height: 18px; margin: 0 3px; border: 0; background: #c4c4c4; }
.group .drop { width: 45px; justify-content: flex-start; padding-left: 5px; }
.drop::after {
  content: "";
  margin-left: 5px;
  border: 4px solid transparent;
  border-top: 4px solid #777;
  border-bottom: 0;
}
.mini::after {
  content: "";
  position: absolute;
  right: 2px;
  bottom: 3px;
  border: 3px solid transparent;
  border-top: 3px solid #666;
  border-bottom: 0;
}
.group .down { background: #dcdcdc; border: 1px solid #aaa; border-radius: 3px; }
.off svg, .dim svg { opacity: .42; }
.file { width: 418px; }
.hist { width: 294px; }
.snap { width: 328px; }
.group.digit { margin-left: 0; width: 145px; }
.plug { width: 247px; }
.group input { border: 1px solid #aaa; border-radius: 3px; background: #fff; font: inherit; color: #777; padding: 0 4px; }
.group .num { width: 52px; height: 20px; background: #f4f4f4; }
.group input.geo { width: 108px; height: 22px; padding: 0 1px; font: 11px "Open Sans", sans-serif; }
.geo::placeholder { color: #777; }
.one { font: bold 8px "Open Sans", sans-serif; fill: #666; }

main { flex: 1; min-height: 0; display: flex; }
.side { flex: none; width: 50px; padding-top: 14px; border-right: 1px solid #b0b0b0; background: linear-gradient(90deg, #fafafa, #efefef); overflow: hidden; }
.side::before {
  content: "";
  display: block;
  height: 5px;
  width: 17px;
  margin: -8px auto 0;
  background: radial-gradient(circle, #b0b0b0 1px, transparent 1px) 0 0 / 3px 3px;
}
.side button { display: flex; align-items: center; width: 49px; height: 32px; padding-left: 6px; }
.side svg { width: 24px; height: 24px; }
.side .drop::after { margin-left: 6px; }

.panel { flex: none; width: 395px; display: flex; flex-direction: column; border-right: 1px solid #b0b0b0; overflow: hidden; }
.head { flex: none; height: 20px; display: flex; align-items: center; gap: 3px; padding-left: 4px; }
.head h2 { width: 361px; }
.head svg { flex: none; width: 12px; height: 12px; }
.tools { flex: none; height: 31px; display: flex; align-items: center; gap: 9px; padding-left: 8px; border-bottom: 1px solid #b0b0b0; }
.tools svg { width: 16px; height: 16px; }
.tools .drop { display: flex; align-items: center; width: 28px; }
.tools .drop::after { margin-left: 4px; border-top-color: #aaa; }
.tree { flex: 1; background: #fff; list-style: none; }
.tree label { display: flex; align-items: center; height: 18px; color: #808080; font-weight: bold; font-style: italic; white-space: nowrap; }
.tree label::before { content: ""; margin: 0 9px 0 7px; border: 4px solid transparent; border-top: 4px solid #555; border-bottom: 0; }
.tree input { appearance: none; position: relative; flex: none; width: 14px; height: 14px; margin: 0 8px 0 0; border: 1px solid #b4b4b4; background: #fff; }
.tree input:checked::after {
  content: "";
  position: absolute;
  left: 4px;
  top: 0;
  width: 5px;
  height: 9px;
  border: solid #000;
  border-width: 0 2px 2px 0;
  transform: rotate(40deg);
}
.tree label svg { flex: none; width: 14px; height: 14px; margin-right: 6px; }
.tree .live label { color: #000; font-style: normal; }
.tree p { display: flex; align-items: center; height: 18px; padding-left: 66px; }
.tree .min { padding-left: 44px; }
.min::before { content: ""; width: 16px; height: 16px; margin-right: 6px; background: #000; }

.map { flex: 1; min-width: 0; margin-left: 6px; border: solid #b0b0b0; border-width: 1px 0 0 1px; background: #f2efe9; }
.map svg { width: 100%; height: 100%; }
.wood { fill: #bddab1; }
.soft { fill: #cbe3b4; }
.lake { fill: #a8d1f8; }
.fill { fill: #a9d2df; }
.road { fill: none; stroke: #f8ac96; stroke-width: 3; stroke-linejoin: round; }
.edge { fill: none; stroke: #bfaac2; stroke-width: 5; stroke-linejoin: round; }
.edge.wide { stroke-width: 9; }
.edge.slim { stroke-width: 3; }
.water { fill: none; stroke: #b5d9e4; stroke-width: 3; }
.dot { fill: #fff; stroke: #555; stroke-width: 1; }
.map text { font-family: "Noto Sans", sans-serif; paint-order: stroke; stroke: #f5f2ed; stroke-width: 2px; }
.town { font-size: 10px; fill: #444; }
.city { font-size: 12px; fill: #333; }
.region { font-size: 10px; font-style: italic; fill: #8d6f98; }
```
